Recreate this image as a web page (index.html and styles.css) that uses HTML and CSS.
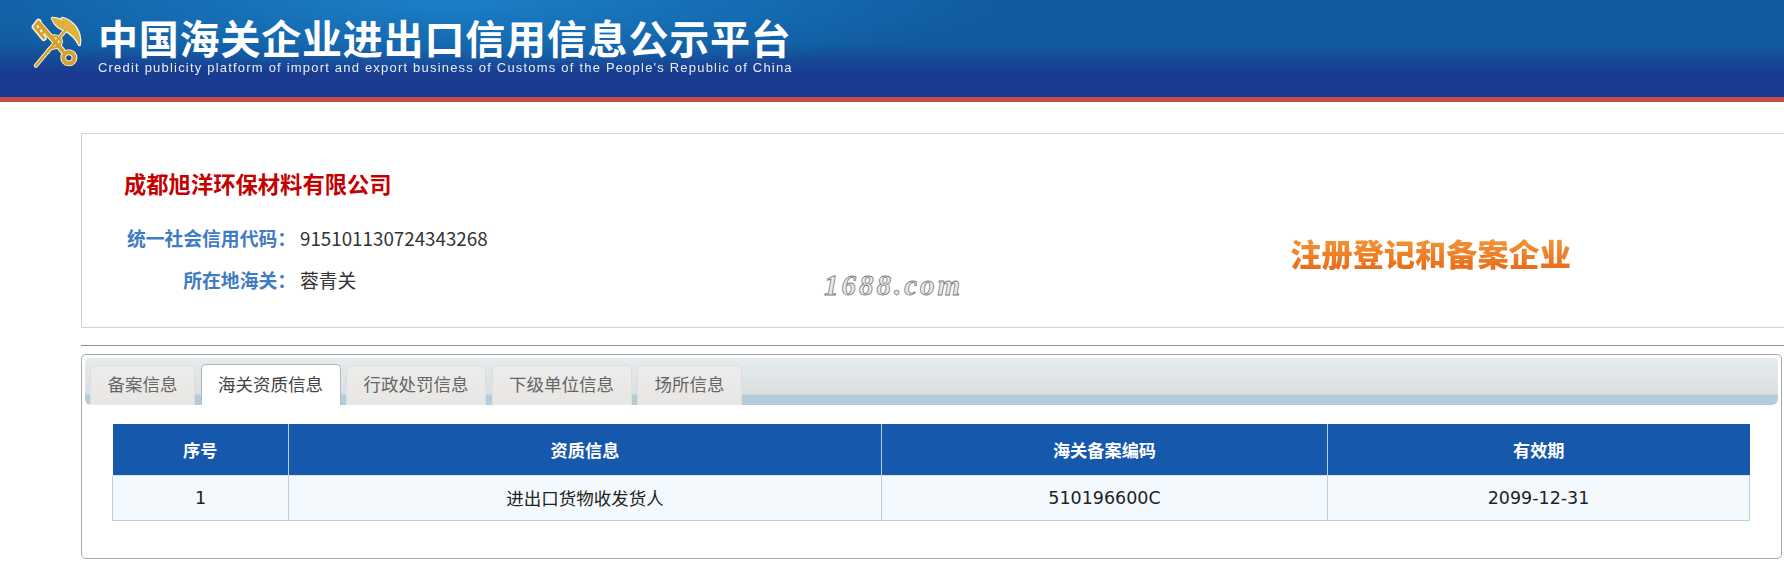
FILE: index.html
```html
<!DOCTYPE html>
<html lang="zh-CN">
	<head>
		<meta charset="UTF-8" />
		<meta
			name="viewport"
			content="width=device-width, initial-scale=1.0"
		/>
		<title>中国海关企业进出口信用信息公示平台</title>
		<link rel="stylesheet" href="styles.css">
	</head>
	<body>
		<header class="site-header">
			<svg class="logo" viewBox="28 18 164 164" aria-hidden="true">
				<!-- white outline first, gold on top -->
				<g class="logo-outline">
					<path d="M56 44 L128 128" />
					<path d="M42 54 L70 88 M42 54 L54 38 M52 66 L62 54 M62 78 L72 66" />
					<circle cx="146" cy="148" r="17" />
					<path class="logo-thin" d="M46 172 L134 66" />
					<path class="logo-wing" d="M96 28 C118 28 134 40 142 62 C122 64 104 50 96 28 Z" />
					<path class="logo-wing" d="M126 28 C158 36 184 68 178 108 C168 84 150 72 130 60 Z" />
					<path class="logo-thin" d="M90 86 C112 76 132 96 116 110 C104 120 84 116 82 130" />
				</g>
				<g class="logo-gold">
					<path d="M56 44 L128 128" />
					<path class="logo-tooth" d="M42 54 L70 88 M42 54 L54 38 M52 66 L62 54 M62 78 L72 66" />
					<circle cx="146" cy="148" r="17" />
					<path class="logo-thin" d="M46 172 L134 66" />
					<path class="logo-wing" d="M96 28 C118 28 134 40 142 62 C122 64 104 50 96 28 Z" />
					<path class="logo-wing" d="M126 28 C158 36 184 68 178 108 C168 84 150 72 130 60 Z" />
					<path class="logo-thin" d="M90 86 C112 76 132 96 116 110 C104 120 84 116 82 130" />
				</g>
			</svg>
			<div class="brand">
				<div class="brand-title">中国海关企业进出口信用信息公示平台</div>
				<div class="brand-sub">Credit publicity platform of import and export business of Customs of the People's Republic of China</div>
			</div>
		</header>

		<section class="company-card">
			<div class="company-info">
				<h1 class="company-name">成都旭洋环保材料有限公司</h1>
				<div class="info-row">
					<span class="info-label">统一社会信用代码：</span>
					<span class="info-value">915101130724343268</span>
				</div>
				<div class="info-row">
					<span class="info-label">所在地海关：</span>
					<span class="info-value">蓉青关</span>
				</div>
			</div>
			<div class="status-badge">注册登记和备案企业</div>
			<div class="watermark">1688.com</div>
		</section>

		<hr class="divider" />

		<section class="tabs-panel">
			<div class="tab-bar">
				<div class="tab">备案信息</div>
				<div class="tab active">海关资质信息</div>
				<div class="tab">行政处罚信息</div>
				<div class="tab">下级单位信息</div>
				<div class="tab">场所信息</div>
			</div>
			<table class="data-table">
				<thead>
					<tr>
						<th class="col-no">序号</th>
						<th class="col-name">资质信息</th>
						<th class="col-code">海关备案编码</th>
						<th>有效期</th>
					</tr>
				</thead>
				<tbody>
					<tr>
						<td>1</td>
						<td>进出口货物收发货人</td>
						<td>510196600C</td>
						<td>2099-12-31</td>
					</tr>
				</tbody>
			</table>
		</section>
	</body>
</html>
```

FILE: styles.css
```css
* {
	margin: 0;
	padding: 0;
	box-sizing: border-box;
}

body {
	font-family: 'DejaVu Sans', 'Noto Sans CJK SC', sans-serif;
	background: #fff;
	color: #333;
	height: 564px;
	overflow: hidden;
}

.site-header {
	height: 102px;
	display: flex;
	align-items: flex-start;
	padding: 15px 0 0 30px;
	border-bottom: 5px solid #c2504a;
	background:
		radial-gradient(
			ellipse 560px 75px at 450px 0,
			#1b80c8 0%,
			rgba(27, 128, 200, 0) 100%
		),
		linear-gradient(
			180deg,
			#115a9f 0,
			#115a9f 45px,
			#1a3c90 72px,
			#1a3c90 100%
		);
}

.logo {
	width: 54px;
	height: 54px;
	margin-right: 14px;
	flex-shrink: 0;
}

.logo-outline,
.logo-gold {
	fill: none;
	stroke-linecap: round;
	stroke-linejoin: round;
}

.logo-outline {
	stroke: #f7f1dc;
	stroke-width: 18;
}

.logo-gold {
	stroke: #d5a02c;
	stroke-width: 12;
}

.logo-outline .logo-thin {
	stroke-width: 13;
}

.logo-outline .logo-wing {
	fill: #f7f1dc;
	stroke-width: 10;
}

.logo-gold .logo-thin {
	stroke-width: 7;
}

.logo-gold .logo-tooth {
	stroke-width: 8;
}

.logo-gold .logo-wing {
	fill: #e0b23e;
	stroke-width: 2;
}

.brand {
	color: #fff;
}

.brand-title {
	font-family: 'Noto Sans CJK SC', sans-serif;
	font-size: 40px;
	font-weight: 700;
	line-height: 44px;
	letter-spacing: 0.8px;
	white-space: nowrap;
}

.brand-sub {
	font-family: 'Liberation Sans', sans-serif;
	font-size: 13px;
	line-height: 15px;
	letter-spacing: 1.2px;
	margin-top: 1px;
	white-space: nowrap;
	opacity: 0.9;
}

.company-card {
	position: relative;
	display: flex;
	justify-content: space-between;
	align-items: center;
	height: 195px;
	margin: 31px 0 0 81px;
	padding: 0 213px 0 42px;
	border: 1px solid #d4d4d4;
	border-right: 0;
}

.company-info {
	padding-top: 6px;
}

.company-name {
	font-family: 'Noto Sans CJK SC', sans-serif;
	font-size: 22.3px;
	line-height: 32px;
	font-weight: 700;
	color: #c40000;
	margin-bottom: 17px;
}

.info-row {
	display: flex;
	align-items: center;
	height: 42px;
	font-family: 'Noto Sans CJK SC', sans-serif;
	font-size: 18.8px;
}

.info-label {
	width: 172px;
	margin-right: 4px;
	flex-shrink: 0;
	text-align: right;
	font-weight: 700;
	white-space: nowrap;
	color: #3f7cc4;
}

.info-value {
	color: #333;
	font-size: 18.8px;
	font-weight: 400;
}

.status-badge {
	font-family: 'Noto Sans CJK SC', sans-serif;
	font-size: 31.2px;
	line-height: 36px;
	font-weight: 900;
	margin-top: 44px;
	background: linear-gradient(180deg, #f39a3a, #e86a18);
	-webkit-background-clip: text;
	background-clip: text;
	color: transparent;
}

.watermark {
	position: absolute;
	left: 742px;
	top: 135px;
	font-family: 'Liberation Serif', serif;
	font-style: italic;
	font-weight: 700;
	font-size: 29px;
	letter-spacing: 3px;
	color: #e9e9e9;
	-webkit-text-stroke: 0.8px #7c7c7c;
}

.divider {
	border: 0;
	border-top: 1px solid #8f8f96;
	margin: 17px 0 0 81px;
}

.tabs-panel {
	height: 205px;
	margin: 8px 2px 0 81px;
	padding: 3px 3px 0;
	border: 1px solid #a9a9a9;
	border-radius: 5px;
}

.tab-bar {
	display: flex;
	align-items: flex-end;
	gap: 5.5px;
	height: 47px;
	padding-left: 5px;
	border-radius: 5px 5px 6px 6px;
	background: linear-gradient(
		180deg,
		#e6ebee 0,
		#dadfe2 36px,
		#b5cddb 37px,
		#b5cddb 100%
	);
}

.tab {
	height: 40px;
	padding: 0 16.5px;
	border: 1px solid #dcdfe0;
	border-bottom: 0;
	border-radius: 5px 5px 0 0;
	background: linear-gradient(180deg, #ececec, #e9e6e3);
	color: #666;
	font-size: 17.5px;
	line-height: 38px;
	white-space: nowrap;
}

.tab.active {
	background: #fff;
	border-color: #b3b8bd;
	color: #444;
	height: 41px;
	line-height: 40px;
}

.data-table {
	width: 1638px;
	margin: 19px 0 0 27px;
	border-collapse: collapse;
	table-layout: fixed;
	font-size: 17.5px;
}

.col-no {
	width: 176px;
}

.col-name {
	width: 593px;
}

.col-code {
	width: 446px;
}

.data-table th {
	height: 51px;
	background: #1658ac;
	color: #fff;
	font-weight: 700;
	font-size: 17.2px;
	border-left: 1px solid #b7d0e8;
	border-bottom: 1px solid #cfe6f5;
}

.data-table th:first-child {
	border-left: 0;
}

.data-table td {
	height: 45px;
	text-align: center;
	color: #222;
	background: #f3f9fd;
	border: 1px solid #b9d2de;
}
```
